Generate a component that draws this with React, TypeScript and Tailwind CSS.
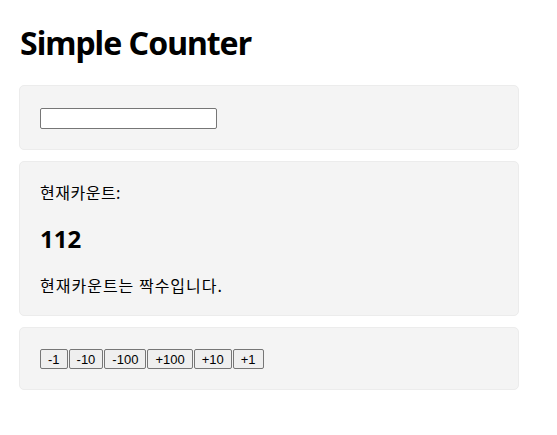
import React, { useState } from "react";

const steps = [-1, -10, -100, 100, 10, 1];

const App = () => {
  const [count, setCount] = useState(112);
  const [text, setText] = useState("");

  return (
    <div className="min-h-screen bg-white px-[19px] font-['Noto_Sans','Noto_Sans_CJK_KR',sans-serif] text-black">
      <div className="max-w-[500px]">
        <h1 className="mt-[21px] mb-[20px] pl-[1px] text-[32px] leading-[44px] font-bold tracking-[-1px]">
          Simple Counter
        </h1>

        <div className="flex flex-col gap-[11px]">
          {/* input */}
          <div className="rounded-[5px] border border-[#ececec] bg-[#f4f4f4] px-5 pt-[22px] pb-[20px]">
            <input
              type="text"
              value={text}
              onChange={(e) => setText(e.target.value)}
              className="block h-[21px] w-[177px] rounded-[2px] border border-[#767676] bg-white px-[2px] text-[13px] outline-none"
            />
          </div>

          {/* view */}
          <div className="rounded-[5px] border border-[#ececec] bg-[#f4f4f4] px-5 pt-[18px] pb-[18px] font-['Noto_Sans_CJK_KR',sans-serif]">
            <p className="text-[16px] leading-6 tracking-[0.5px]">현재카운트:</p>
            <h2 className="mt-[19px] mb-[18px] text-[24px] leading-[32px] font-bold font-['Noto_Sans',sans-serif]">
              {count}
            </h2>
            <p className="text-[16px] leading-6 tracking-[1px]">
              현재카운트는 {count % 2 === 0 ? "짝수" : "홀수"}입니다.
            </p>
          </div>

          {/* controller */}
          <div className="rounded-[5px] border border-[#ececec] bg-[#f4f4f4] px-5 pt-[21px] pb-[20px]">
            <div className="flex gap-[1px]">
              {steps.map((n) => (
                <button
                  key={n}
                  onClick={() => setCount(count + n)}
                  className="h-[20px] rounded-[2px] border border-[#767676] bg-[#efefef] px-[7px] font-['Liberation_Sans',Arial,sans-serif] text-[13px] leading-none text-black"
                >
                  {n > 0 ? `+${n}` : n}
                </button>
              ))}
            </div>
          </div>
        </div>
      </div>
    </div>
  );
};

export default App;
